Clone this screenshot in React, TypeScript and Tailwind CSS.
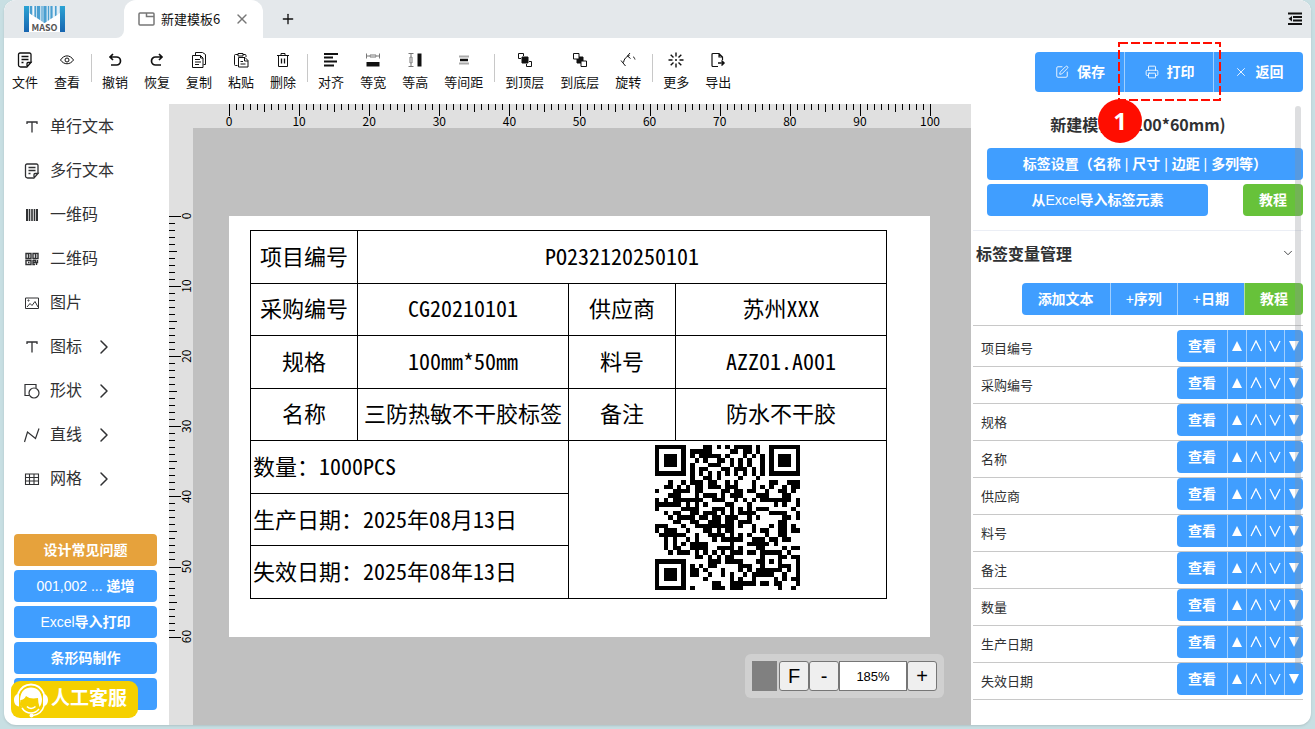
import React from "react";
import { ChevronDown, ChevronRight, Plus, Printer, SquarePen, X } from "lucide-react";

const BUTTON_FONT = "font-['Liberation_Sans','Noto_Sans_CJK_SC',sans-serif]";
const LABEL_FONT = "font-['Noto_Sans_Mono_CJK_SC','Noto_Sans_CJK_SC',monospace]";

interface GlyphProps {
  children: React.ReactNode;
  className?: string;
}

const Glyph: React.FC<GlyphProps> = ({ children, className = "size-4" }) => (
  <svg
    className={className}
    viewBox="0 0 16 16"
    fill="none"
    stroke="currentColor"
    strokeWidth="1"
    aria-hidden="true"
  >
    {children}
  </svg>
);

const NoteIcon = () => (
  <Glyph>
    <g strokeWidth="1.300">
      <path d="M9.500 15H3.500a2 2 0 0 1-2-2V2.500a1.500 1.500 0 0 1 1.500-1.500h9.500a1.500 1.500 0 0 1 1.500 1.500V10.500" />
      <path d="M14 10.500H11a1 1 0 0 0-1 1V15l4-4.500Z" />
      <path d="M4.500 4.500h7M4.500 7.500h7M4.500 10.500h2" />
    </g>
  </Glyph>
);

const CopyIcon = () => (
  <Glyph>
    <path d="M4.500 3.500V.5h7l3 2v10h-2" />
    <path d="M1.500 3.500h8l2.500 2.500v9.500H1.500zM9.500 3.500V6H12M4 7.500h5M4 10h6M4 12.500h4" />
  </Glyph>
);

const PasteIcon = () => (
  <Glyph>
    <path d="M4.500 13.500h-2a1 1 0 0 1-1-1v-9a1 1 0 0 1 1-1H5M10 2.500h2a1 1 0 0 1 1 1V5" />
    <path d="M5 1.500h5v2.500H5zM5.500 5.500h6.500l3 3v6.500H5.500zM11.500 6v3H15M7.500 9.500h2.500M7.500 12h5" />
  </Glyph>
);

const TextIcon = () => (
  <Glyph>
    <path d="M3 5V3h10v2M8 3v10.500" strokeWidth="1.300" />
  </Glyph>
);

const BarcodeIcon = () => (
  <Glyph>
    <path d="M3 2v12M13 2v12" strokeWidth="2" />
    <path d="M5.500 2v12M8 2v12M10.500 2v12" strokeWidth="1.600" />
  </Glyph>
);

const QrIcon = () => (
  <Glyph>
    <path
      d="M2 2.500h5v5H2zM9 2.500h5v5H9zM2 9.500h5v4H2zM4 5h1.500M11 5h1.500M4 11.500h1.500M9 9.500h2.500v2H9v2h2M13.500 9v2.500h-1V14M9 9v5M4.500 3v4M11.500 3v4"
      strokeWidth="1.400"
    />
  </Glyph>
);

const PictureIcon = () => (
  <Glyph>
    <path d="M1.500 3h13v10.500h-13zM3 12l3-3.500 2 2 3-4 3 5.500" />
    <circle cx="4.500" cy="5.500" r=".6" />
  </Glyph>
);

const ShapeIcon = () => (
  <Glyph>
    <path d="M5 12.500H1V1.500h11V5" strokeWidth="1.200" />
    <circle cx="10" cy="10" r="5" strokeWidth="1.200" />
  </Glyph>
);

const LineIcon = () => (
  <Glyph>
    <path d="M.5 15 3.500 5l8 6.500L15 1.500" strokeWidth="1.200" />
  </Glyph>
);

const GridIcon = () => (
  <Glyph>
    <path d="M1.500 3h13v10.500h-13zM1.500 6.500h13M1.500 10h13M5.500 3v10.500M10 3v10.500" strokeWidth="1.100" />
  </Glyph>
);

interface Tool {
  label: string;
  icon: React.ReactNode;
}

const toolGroups: Tool[][] = [
  [
    { label: "文件", icon: <NoteIcon /> },
    {
      label: "查看",
      icon: (
        <Glyph>
          <path d="M1.500 8C5 2.500 11 2.500 14.500 8 11 13 5 13 1.500 8Z" />
          <circle cx="8" cy="8" r="2" />
        </Glyph>
      ),
    },
  ],
  [
    {
      label: "撤销",
      icon: (
        <Glyph>
          <path d="M6 2 3 5l3 3M3 5h6.500a4 4 0 0 1 0 8H4" strokeWidth="1.700" />
        </Glyph>
      ),
    },
    {
      label: "恢复",
      icon: (
        <Glyph>
          <path d="m10 2 3 3-3 3M13 5H6.500a4 4 0 0 0 0 8H12" strokeWidth="1.700" />
        </Glyph>
      ),
    },
    { label: "复制", icon: <CopyIcon /> },
    { label: "粘贴", icon: <PasteIcon /> },
    {
      label: "删除",
      icon: (
        <Glyph>
          <path d="M2 3.500h12M6 3V1.500h4V3M3.500 3.500v11h9v-11" />
          <path d="M6.500 6.500v5M9.500 6.500v5" strokeWidth="1.300" />
        </Glyph>
      ),
    },
  ],
  [
    {
      label: "对齐",
      icon: (
        <Glyph>
          <path d="M1 2h14M1 5.500h9M1 9.500h13M1 13.500h10" strokeWidth="1.800" />
        </Glyph>
      ),
    },
    {
      label: "等宽",
      icon: (
        <Glyph>
          <path d="M1.500 1.500v5M14.500 1.500v5M1.500 4h3M11.500 4h3M5 3h6v2H5z" stroke="#777" />
          <path d="M1.500 10h13v4.500h-13z" fill="currentColor" stroke="none" />
        </Glyph>
      ),
    },
    {
      label: "等高",
      icon: (
        <Glyph>
          <path d="M1.500 1.500h5M1.500 14.500h5M4 1.500v3M4 11.500v3M3 5h2v6H3z" stroke="#777" />
          <path d="M10.500 1.500h4v13h-4z" fill="currentColor" stroke="none" />
        </Glyph>
      ),
    },
    {
      label: "等间距",
      icon: (
        <Glyph>
          <path d="M3 4.500h10M3 11.500h10" stroke="#aaa" strokeWidth="2" />
          <path d="M4 8h8" strokeWidth="2.500" />
        </Glyph>
      ),
    },
  ],
  [
    {
      label: "到顶层",
      icon: (
        <Glyph>
          <path d="M4 6.500H1.500v-5h5V4M9.500 12v2.500h5v-5H12" />
          <path d="M5 5h6v6H5z" fill="currentColor" />
        </Glyph>
      ),
    },
    {
      label: "到底层",
      icon: (
        <Glyph>
          <path d="M5 5h6v6H5z" fill="currentColor" />
          <path d="M1.500 1.500H7V7H1.500zM9 9h5.500v5.500H9z" fill="white" />
        </Glyph>
      ),
    },
    {
      label: "旋转",
      icon: (
        <Glyph>
          <path d="M1 8.500 5.500 14M3.500 10.500C4 7 6 4.500 9.500 3.500M13 4.500c1 .8 1.500 1.500 2 3M10 1 7.500 4l3 2.500" />
        </Glyph>
      ),
    },
  ],
  [
    {
      label: "更多",
      icon: (
        <Glyph>
          <path
            d="M8 .5v4M8 11.500v4M.5 8h4M11.500 8h4M2.700 2.700l2.800 2.800M10.500 10.500l2.800 2.800M13.300 2.700l-2.800 2.800M5.500 10.500l-2.800 2.800"
            strokeWidth="1.400"
          />
          <circle cx="8" cy="8" r="1" fill="currentColor" stroke="none" />
        </Glyph>
      ),
    },
    {
      label: "导出",
      icon: (
        <Glyph>
          <path d="M8 14.500H3a1 1 0 0 1-1-1v-11a1 1 0 0 1 1-1h6L12.500 5v3M9 1.500V5h3.500" strokeWidth="1.200" />
          <path d="M8 11h6M11.500 8.500 14 11l-2.500 2.500" strokeWidth="1.500" />
        </Glyph>
      ),
    },
  ],
];

const elements = [
  { label: "单行文本", icon: <TextIcon /> },
  { label: "多行文本", icon: <NoteIcon /> },
  { label: "一维码", icon: <BarcodeIcon /> },
  { label: "二维码", icon: <QrIcon /> },
  { label: "图片", icon: <PictureIcon /> },
  { label: "图标", icon: <TextIcon />, more: true },
  { label: "形状", icon: <ShapeIcon />, more: true },
  { label: "直线", icon: <LineIcon />, more: true },
  { label: "网格", icon: <GridIcon />, more: true },
];

const variables = [
  "项目编号",
  "采购编号",
  "规格",
  "名称",
  "供应商",
  "料号",
  "备注",
  "数量",
  "生产日期",
  "失效日期",
];

const MM = 7.01;

const tickLength = (i: number) => (i % 10 === 0 ? 12 : i % 5 === 0 ? 8 : 6);

const TopRuler = () => (
  <svg className="h-6 w-full" aria-hidden="true">
    {Array.from({ length: 101 }, (_, i) => (
      <path
        key={i}
        d={`M${Math.round(60 + i * MM) + 0.5} 0v${tickLength(i)}`}
        stroke="black"
      />
    ))}
    {Array.from({ length: 11 }, (_, i) => (
      <text key={i} x={60 + i * 10 * MM} y="22" textAnchor="middle" fontSize="12">
        {i * 10}
      </text>
    ))}
  </svg>
);

const LeftRuler = () => (
  <svg className="h-full w-6" aria-hidden="true">
    {Array.from({ length: 61 }, (_, i) => (
      <path
        key={i}
        d={`M0 ${Math.round(88 + i * MM) + 0.5}h${tickLength(i)}`}
        stroke="black"
      />
    ))}
    {Array.from({ length: 7 }, (_, i) => (
      <text
        key={i}
        transform={`translate(22 ${88 + i * 10 * MM}) rotate(-90)`}
        textAnchor="middle"
        fontSize="12"
      >
        {i * 10}
      </text>
    ))}
  </svg>
);

const QR_SIZE = 33;

const inFinder = (x: number, y: number) =>
  (x < 8 && y < 8) || (x > QR_SIZE - 9 && y < 8) || (x < 8 && y > QR_SIZE - 9);

const qrPath = () => {
  let seed = 20250813;
  let d = "";
  for (let y = 0; y < QR_SIZE; y++) {
    for (let x = 0; x < QR_SIZE; x++) {
      seed = (seed * 48271) % 2147483647;
      const inAlign = x > 23 && x < 29 && y > 23 && y < 29;
      if (inFinder(x, y) || inAlign) continue;
      const dark = x === 6 || y === 6 ? (x + y) % 2 === 0 : (seed >> 12) % 2 === 0;
      if (dark) d += `M${x} ${y}h1v1h-1z`;
    }
  }
  return d;
};

const QrCode = () => (
  <svg
    className="mx-auto size-[145px]"
    viewBox="0 0 33 33"
    shapeRendering="crispEdges"
    role="img"
    aria-label="二维码"
  >
    <path d={qrPath()} />
    {[
      [0, 0],
      [26, 0],
      [0, 26],
    ].map(([x, y]) => (
      <g key={`${x}-${y}`}>
        <rect x={x + 0.5} y={y + 0.5} width="6" height="6" fill="none" stroke="black" />
        <rect x={x + 2} y={y + 2} width="3" height="3" />
      </g>
    ))}
    <rect x="24.500" y="24.500" width="4" height="4" fill="none" stroke="black" />
    <rect x="26" y="26" width="1" height="1" />
  </svg>
);

const Logo = () => (
  <svg className="h-[26px] w-[41px]" viewBox="0 0 41 26" role="img" aria-label="MASO">
    <defs>
      <linearGradient id="logo" x1="0" y1="0" x2="0" y2="1">
        <stop offset="0" stopColor="#2ba3d4" />
        <stop offset="1" stopColor="#1765b0" />
      </linearGradient>
    </defs>
    <rect width="41" height="26" fill="white" />
    <path d="M5 0h31v7L20.500 17 5 7z" fill="#c3deee" />
    <path d="M0 0h5v26H0zM36 0h5v26h-5z" fill="url(#logo)" />
    <path
      d="M6 0h2v9L6 7.600zM10.500 0h1.500v11.500l-1.500-1zM13 0h3v14l-3-1.900zM17.500 0h1v15.700l-1-.6zM19.500 0h3v15.700L20.500 17l-1-.6zM24 0h1v14l-1 .7zM26.500 0h2v11.800l-2 1.300zM31 0h1.500v9.300l-1.500 1z"
      fill="#4a9fd0"
    />
    <path d="M9 0h.8v9.600L9 9zM29.500 0h.8v10.700l-.8.500zM33.500 0h1v8l-1 .6z" fill="white" />
    <text x="20.500" y="25" textAnchor="middle" fontSize="9" fontWeight="bold" fill="#555">
      MASO
    </text>
  </svg>
);

const TitleBar = () => (
  <header className="flex h-[38px] shrink-0 bg-white">
    <div className="flex w-[120px] items-center rounded-br-lg bg-[#e4e8eb] pl-5">
      <Logo />
    </div>
    <div className="bg-[#e4e8eb]">
      <div className="flex h-full w-[139px] items-center rounded-t-xl bg-white pl-3.5 text-[13px]">
        <svg
          className="mr-1.5 h-3.5 w-[17px]"
          viewBox="0 0 17 14"
          fill="none"
          stroke="#777"
          strokeWidth="1.500"
          aria-hidden="true"
        >
          <path d="M2 1h13a1 1 0 0 1 1 1v10a1 1 0 0 1-1 1H2a1 1 0 0 1-1-1V2a1 1 0 0 1 1-1ZM8.500 1v3.500H16" />
        </svg>
        新建模板6
        <button type="button" aria-label="关闭" className="ml-3.5 text-[#777]">
          <X className="size-4" strokeWidth={2} />
        </button>
      </div>
    </div>
    <div className="flex flex-1 items-center justify-between bg-[#e4e8eb] pr-2 pl-[17px]">
      <button type="button" aria-label="新建标签">
        <Plus className="size-4" strokeWidth={2} />
      </button>
      <button type="button" aria-label="菜单">
        <Glyph>
          <path d="M1 2.500h14M6 6h9M6 9.500h9M1 13h14" strokeWidth="1.800" />
          <path d="M5 5v5.500L1.500 7.700z" fill="currentColor" stroke="none" />
        </Glyph>
      </button>
    </div>
  </header>
);

const Toolbar = () => (
  <nav className="flex h-[66px] shrink-0 items-start text-[13px]">
    {toolGroups.map((group, index) => (
      <React.Fragment key={index}>
        {index > 0 && <div className="mt-4 mr-0.5 ml-[3px] h-7 w-px bg-[#c8c8c8]" />}
        {group.map((tool) => (
          <button
            key={tool.label}
            type="button"
            className="flex flex-col items-center gap-1 px-2 pt-3.5 leading-5"
          >
            {tool.icon}
            {tool.label}
          </button>
        ))}
      </React.Fragment>
    ))}
  </nav>
);

const sideButton = "h-8 rounded bg-[#409eff] text-sm font-bold text-white";

const Sidebar = () => (
  <aside className={`relative flex w-[165px] shrink-0 flex-col justify-between pb-[15px] ${BUTTON_FONT}`}>
    <ul className="pt-px text-base text-[#303133]">
      {elements.map((item) => (
        <li key={item.label}>
          <button type="button" className="flex h-11 w-full items-center pl-5">
            {item.icon}
            <span className="ml-2.5">{item.label}</span>
            {item.more && <ChevronRight className="ml-2.5 size-6" strokeWidth={1.500} />}
          </button>
        </li>
      ))}
    </ul>
    <div className="mr-3 ml-2.5 flex flex-col gap-1">
      <button type="button" className="h-8 rounded bg-[#e6a23c] text-sm font-bold text-white">
        设计常见问题
      </button>
      <button type="button" className={sideButton}>
        <span className="font-normal">001,002 ... </span>递增
      </button>
      <button type="button" className={sideButton}>
        <span className="font-normal">Excel</span>导入打印
      </button>
      <button type="button" className={sideButton}>条形码制作</button>
      <button type="button" aria-label="更多教程" className={sideButton} />
    </div>
    <button
      type="button"
      className="absolute bottom-[7px] left-[7px] flex h-[37px] w-[127px] items-center gap-0.5 rounded-[9px] bg-[#f5d000] pl-0.5 text-[19px] font-bold text-white"
    >
      <svg className="size-9" viewBox="0 0 36 36" fill="none" stroke="white" aria-hidden="true">
        <path d="M5 12C8 5 12 2.500 18 2.500S28 5 31 12" strokeWidth="2" />
        <path
          d="M6 11.500C3 12 1 14.500 1 18s2 6 5 6.500zM30 11.500c3 .5 5 3 5 6.500s-2 6-5 6.500z"
          fill="white"
          stroke="none"
        />
        <path
          d="M7 17C8 9 12 5.500 18 5.500S28 9 29 17c0 4-1 6-2.500 8-1-3-1.500-6-1.500-9-5 1-9 .5-12-2-1 2.500-3.500 4-5.500 4-.5 4 .5 7 3 10C8 25 7 21 7 17Z"
          fill="white"
          stroke="none"
        />
        <path d="M31 24c-1.500 5-5 8.500-11 9.500" strokeWidth="1.500" />
        <path d="M9 26c2 3 5 5 9 5 3.500 0 6-1.500 8-4" strokeWidth="1.500" />
        <path d="M14 24.500c2 2.500 6 2.500 8.500 0" strokeWidth="1.500" />
        <circle cx="18.500" cy="33.500" r="2" fill="white" stroke="none" />
      </svg>
      人工客服
    </button>
  </aside>
);

const cell = "border border-black p-0 pb-1 text-center font-normal";
const wideCell = "border border-black p-0 pb-1 pl-0.5 text-left font-normal";

const LabelTable = () => (
  <table
    className={`h-[369px] w-[637px] table-fixed border-collapse text-[22px] leading-8 text-black ${LABEL_FONT}`}
  >
    <colgroup>
      <col className="w-[107px]" />
      <col className="w-[211px]" />
      <col className="w-[107px]" />
      <col />
    </colgroup>
    <tbody className="[&>tr]:h-[52px]">
      <tr>
        <th className={cell}>项目编号</th>
        <td className={cell} colSpan={3}>PO232120250101</td>
      </tr>
      <tr>
        <th className={cell}>采购编号</th>
        <td className={cell}>CG20210101</td>
        <th className={cell}>供应商</th>
        <td className={cell}>苏州XXX</td>
      </tr>
      <tr>
        <th className={cell}>规格</th>
        <td className={cell}>100mm*50mm</td>
        <th className={cell}>料号</th>
        <td className={cell}>AZZ01.A001</td>
      </tr>
      <tr>
        <th className={cell}>名称</th>
        <td className={`${cell} whitespace-nowrap`}>三防热敏不干胶标签</td>
        <th className={cell}>备注</th>
        <td className={cell}>防水不干胶</td>
      </tr>
      <tr>
        <td className={wideCell} colSpan={2}>数量：1000PCS</td>
        <td className={cell} colSpan={2} rowSpan={3}>
          <QrCode />
        </td>
      </tr>
      <tr>
        <td className={wideCell} colSpan={2}>生产日期：2025年08月13日</td>
      </tr>
      <tr>
        <td className={wideCell} colSpan={2}>失效日期：2025年08年13日</td>
      </tr>
    </tbody>
  </table>
);

const zoomButton =
  "h-[30px] w-[30px] rounded-[3px] border border-[#767676] bg-[#efefef] text-xl leading-none text-black";

const Workspace = () => (
  <main className="relative grid min-w-0 flex-1 grid-cols-[24px_1fr] grid-rows-[24px_1fr] overflow-hidden bg-[#c0c0c0]">
    <div className="col-span-2 bg-[#e0e0e0]">
      <TopRuler />
    </div>
    <div className="bg-[#e0e0e0]">
      <LeftRuler />
    </div>
    <div className="overflow-hidden pt-[88px] pl-9">
      <div className="h-[421px] w-[701px] bg-white pt-3.5 pl-[21px]">
        <LabelTable />
      </div>
    </div>
    <div
      className={`absolute right-[27px] bottom-[27px] flex items-center rounded-md bg-[#d0d0d0] p-[7px] ${BUTTON_FONT}`}
    >
      <button type="button" aria-label="背景颜色" className="mr-0.5 h-[30px] w-[25px] bg-[#808080]" />
      <button type="button" className={zoomButton}>F</button>
      <button type="button" className={zoomButton}>-</button>
      <input
        aria-label="缩放"
        defaultValue="185%"
        className="h-[30px] w-[68px] border border-[#767676] bg-white text-center text-[13px] text-black"
      />
      <button type="button" className={zoomButton}>+</button>
    </div>
  </main>
);

const actionButton =
  "-ml-px flex w-[90px] items-center justify-center gap-2 border-l border-[#a0cfff] bg-[#409eff] first:ml-0 first:rounded-l first:border-l-0 last:rounded-r";
const groupButton = "border-l border-[#a0cfff] bg-[#409eff] px-[15px]";
const orderButton =
  "flex w-[19px] items-center justify-center border-l border-[#a0cfff] bg-[#409eff] last:rounded-r";

const VariableRow: React.FC<{ name: string }> = ({ name }) => (
  <li className="flex h-[37px] items-center justify-between border-b border-[#c8c8c8] pl-2 text-[13px] text-[#303133]">
    {name}
    <div className={`flex h-8 self-start text-sm font-bold text-white ${BUTTON_FONT}`}>
      <button type="button" className="w-[50px] rounded-l bg-[#409eff]">查看</button>
      <button type="button" aria-label="置顶" className={orderButton}>
        <svg className="size-3" viewBox="0 0 12 12" fill="currentColor" aria-hidden="true">
          <path d="M6 1l5 10H1z" />
        </svg>
      </button>
      <button type="button" aria-label="上移" className={orderButton}>
        <svg
          className="size-3"
          viewBox="0 0 12 12"
          fill="none"
          stroke="currentColor"
          strokeWidth="1.300"
          aria-hidden="true"
        >
          <path d="M1 11 6 1l5 10" />
        </svg>
      </button>
      <button type="button" aria-label="下移" className={orderButton}>
        <svg
          className="size-3"
          viewBox="0 0 12 12"
          fill="none"
          stroke="currentColor"
          strokeWidth="1.300"
          aria-hidden="true"
        >
          <path d="M1 1l5 10L11 1" />
        </svg>
      </button>
      <button type="button" aria-label="置底" className={orderButton}>
        <svg className="size-3" viewBox="0 0 12 12" fill="currentColor" aria-hidden="true">
          <path d="M1 1h10L6 11z" />
        </svg>
      </button>
    </div>
  </li>
);

const GuideMark = () => (
  <div className="pointer-events-none absolute top-1 right-[90px]">
    <svg className="h-[59px] w-[103px]" viewBox="0 0 103 59" fill="none" aria-hidden="true">
      <rect x="1" y="1" width="101" height="57" stroke="#ff0d00" strokeWidth="2" strokeDasharray="9 3" />
    </svg>
    <span className="absolute top-[57px] left-[-20px] flex size-11 items-center justify-center rounded-full bg-[#ff0d00] font-['Noto_Sans',sans-serif] text-2xl font-bold text-white">
      1
    </span>
  </div>
);

const PropertyPanel = () => (
  <section className="relative flex w-[340px] shrink-0 flex-col pr-2 pl-0.5">
    <div className="flex h-[66px] shrink-0 items-center justify-end pt-0.5">
      <div className={`flex h-10 text-sm font-bold text-white ${BUTTON_FONT}`}>
        <button type="button" className={actionButton}>
          <SquarePen className="size-3.5" strokeWidth={1.500} />
          保存
        </button>
        <button type="button" className={actionButton}>
          <Printer className="size-3.5" strokeWidth={1.500} />
          打印
        </button>
        <button type="button" className={actionButton}>
          <X className="size-3.5" strokeWidth={1.500} />
          返回
        </button>
      </div>
    </div>
    <h1 className="flex h-11 shrink-0 items-center justify-center pb-1 text-base font-bold text-[#303133]">
      新建模板6 (100*60mm)
    </h1>
    <div
      className={`flex flex-col gap-1 border-b border-[#ebeef5] pb-3.5 pl-3.5 text-sm font-bold text-white ${BUTTON_FONT}`}
    >
      <button type="button" className="h-8 rounded bg-[#409eff]">
        标签设置（名称<span className="font-normal"> | </span>尺寸
        <span className="font-normal"> | </span>边距<span className="font-normal"> | </span>
        多列等）
      </button>
      <div className="flex justify-between">
        <button type="button" className="h-8 w-[221px] rounded bg-[#409eff]">
          从<span className="font-normal">Excel</span>导入标签元素
        </button>
        <button type="button" className="h-8 w-[60px] rounded bg-[#67c23a]">
          教程
        </button>
      </div>
    </div>
    <h2 className="flex h-12 shrink-0 items-center justify-between pr-2 pb-1 pl-[3px] text-base font-bold text-[#303133]">
      标签变量管理
      <ChevronDown className="size-3.5" strokeWidth={1.500} />
    </h2>
    <div className={`mt-1 flex h-8 shrink-0 justify-end text-sm font-bold text-white ${BUTTON_FONT}`}>
      <button type="button" className="rounded-l bg-[#409eff] px-4">添加文本</button>
      <button type="button" className={groupButton}>
        <span className="font-normal">+</span>序列
      </button>
      <button type="button" className={groupButton}>
        <span className="font-normal">+</span>日期
      </button>
      <button type="button" className="rounded-r border-l border-[#b3e19d] bg-[#67c23a] px-[15px]">
        教程
      </button>
    </div>
    <ul className="mt-2.5 border-t border-[#c8c8c8] pt-1">
      {variables.map((name) => (
        <VariableRow key={name} name={name} />
      ))}
    </ul>
    <div className="absolute top-[68px] right-2.5 bottom-[54px] w-1.5 rounded-full bg-[#909399]/30" />
    <GuideMark />
  </section>
);

export default function App() {
  return (
    <div className="h-screen min-h-[729px] bg-[#c8dfe3] px-1 pb-1 font-['Noto_Sans_CJK_SC',sans-serif] text-[#111]">
      <div className="flex h-full flex-col overflow-hidden rounded-xl bg-white shadow">
        <TitleBar />
        <div className="flex min-h-0 flex-1">
          <div className="flex min-w-0 flex-1 flex-col">
            <Toolbar />
            <div className="flex min-h-0 flex-1">
              <Sidebar />
              <Workspace />
            </div>
          </div>
          <PropertyPanel />
        </div>
      </div>
    </div>
  );
}
